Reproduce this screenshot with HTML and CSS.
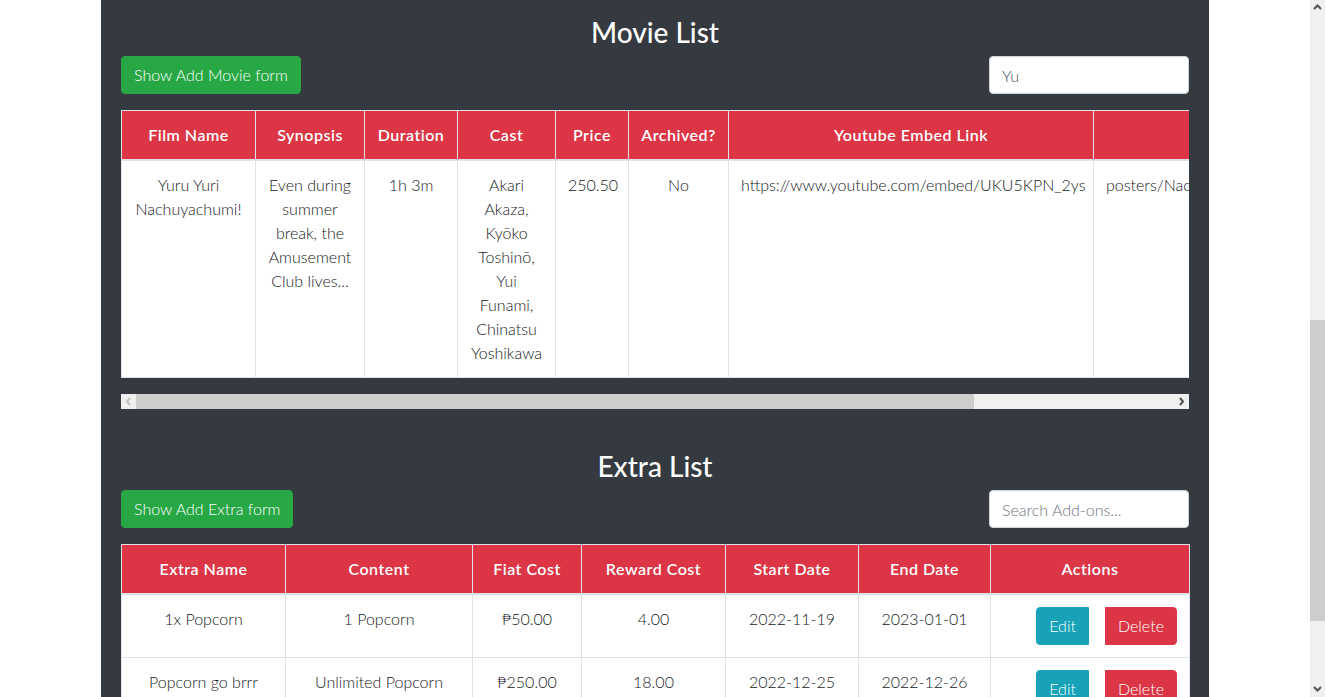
FILE: index.html
```html
<!DOCTYPE html>
<html lang="en">
<head>
<meta charset="utf-8">
<title>Movie List</title>
<link rel="stylesheet" href="styles.css">
</head>
<body>
<div class="viewport">
  <main class="page">
    <div class="panel">
      <section class="list-section">
        <h3 class="list-title">Movie List</h3>
        <div class="toolbar">
          <button class="btn btn-success">Show Add Movie form</button>
          <input class="search" type="text" value="Yu">
        </div>
        <div class="table-clip">
          <table class="data-table movie-table">
            <colgroup>
              <col class="w134"><col class="w109"><col class="w93"><col class="w98"><col class="w73"><col class="w100"><col class="w365"><col class="w350">
            </colgroup>
            <thead>
              <tr>
                <th>Film Name</th><th>Synopsis</th><th>Duration</th><th>Cast</th><th>Price</th><th>Archived?</th><th>Youtube Embed Link</th><th>Poster</th>
              </tr>
            </thead>
            <tbody>
              <tr>
                <td>Yuru Yuri Nachuyachumi!</td>
                <td>Even during summer break, the Amusement Club lives...</td>
                <td>1h 3m</td>
                <td>Akari Akaza, Kyōko Toshinō, Yui Funami, Chinatsu Yoshikawa</td>
                <td>250.50</td>
                <td>No</td>
                <td>https://www.youtube.com/embed/UKU5KPN_2ys</td>
                <td class="left">posters/Nachuyachumi.jpg</td>
              </tr>
            </tbody>
          </table>
        </div>
        <div class="hscroll">
          <div class="sb-btn sb-left"><svg width="15" height="15" viewBox="0 0 15 15"><polyline points="9,4 6,7.5 9,11" fill="none" stroke="#c4c4c4" stroke-width="2"/></svg></div>
          <div class="h-thumb"></div>
          <div class="h-rest"></div>
          <div class="sb-btn sb-right"><svg width="16" height="15" viewBox="0 0 16 15"><polyline points="7,4 10,7.5 7,11" fill="none" stroke="#505050" stroke-width="2"/></svg></div>
        </div>
      </section>

      <section class="list-section extra-section">
        <h3 class="list-title">Extra List</h3>
        <div class="toolbar">
          <button class="btn btn-success">Show Add Extra form</button>
          <input class="search" type="text" placeholder="Search Add-ons...">
        </div>
        <table class="data-table extra-table">
          <colgroup>
            <col class="w164"><col class="w187"><col class="w109"><col class="w144"><col class="w133"><col class="w132"><col class="w199">
          </colgroup>
          <thead>
            <tr>
              <th>Extra Name</th><th>Content</th><th>Fiat Cost</th><th>Reward Cost</th><th>Start Date</th><th>End Date</th><th>Actions</th>
            </tr>
          </thead>
          <tbody>
            <tr>
              <td>1x Popcorn</td><td>1 Popcorn</td><td>₱50.00</td><td>4.00</td><td>2022-11-19</td><td>2023-01-01</td>
              <td class="actions"><button class="btn btn-info">Edit</button><button class="btn btn-danger">Delete</button></td>
            </tr>
            <tr>
              <td>Popcorn go brrr</td><td>Unlimited Popcorn</td><td>₱250.00</td><td>18.00</td><td>2022-12-25</td><td>2022-12-26</td>
              <td class="actions"><button class="btn btn-info">Edit</button><button class="btn btn-danger">Delete</button></td>
            </tr>
          </tbody>
        </table>
      </section>
    </div>
  </main>
  <div class="vscroll">
    <div class="sb-btn v-btn"><svg width="15" height="17" viewBox="0 0 15 17"><polyline points="4,9 7.5,5.5 11,9" fill="none" stroke="#505050" stroke-width="2"/></svg></div>
    <div class="v-before"></div>
    <div class="v-thumb"></div>
    <div class="v-after"></div>
    <div class="sb-btn v-btn"><svg width="15" height="17" viewBox="0 0 15 17"><polyline points="4,7 7.5,10.5 11,7" fill="none" stroke="#505050" stroke-width="2"/></svg></div>
  </div>
</div>
</body>
</html>
```

FILE: styles.css
```css
html, body {
  margin: 0;
  padding: 0;
  height: 697px;
  overflow: hidden;
  background: #fff;
}

body {
  font-family: Lato, "Open Sans", "Liberation Sans", sans-serif;
  font-size: 16px;
  line-height: 24px;
  font-weight: 300;
  color: #16191c;
}

.viewport {
  display: flex;
  height: 697px;
}

.page {
  flex: 1;
  background: #fff;
  overflow: hidden;
}

.panel {
  width: 1108px;
  box-sizing: border-box;
  margin: 0 auto;
  min-height: 697px;
  background: #343a40;
  padding: 15px 20px 0;
}

.list-title {
  margin: 0 0 7px;
  font-size: 28px;
  line-height: 34px;
  font-weight: 500;
  color: #fff;
  text-align: center;
}

.extra-section {
  margin-top: 40px;
}

.toolbar {
  display: flex;
  justify-content: space-between;
  align-items: center;
  margin-bottom: 16px;
}

.btn {
  font-family: inherit;
  font-size: 16px;
  line-height: 24px;
  padding: 6px 12px;
  border: 1px solid transparent;
  border-radius: 4px;
  color: #fff;
  cursor: pointer;
  font-weight: 300;
}

.btn-success {
  background: #28a745;
  border-color: #28a745;
}

.btn-info {
  background: #17a2b8;
  border-color: #17a2b8;
  border-radius: 4px 0 0 4px;
}

.btn-danger {
  background: #dc3545;
  border-color: #dc3545;
  border-radius: 0 4px 4px 0;
  margin-left: 16px;
}

.search {
  width: 200px;
  height: 38px;
  box-sizing: border-box;
  padding: 6px 12px;
  border: 1px solid #ced4da;
  border-radius: 4px;
  background: #fff;
  font-family: inherit;
  font-size: 16px;
  line-height: 24px;
  font-weight: 300;
  color: #495057;
}

.search::placeholder {
  color: #6c757d;
}

.table-clip {
  width: 1068px;
  overflow: hidden;
}

.data-table {
  border-collapse: collapse;
  table-layout: fixed;
  background: #fff;
  margin-bottom: 16px;
}

.movie-table {
  width: 1322px;
}

.extra-table {
  width: 1068px;
}

.data-table th,
.data-table td {
  border: 1px solid #dee2e6;
  padding: 12px;
  vertical-align: top;
  text-align: center;
}

.data-table th {
  background: #dc3545;
  color: #fff;
  font-weight: 600;
  letter-spacing: 0.5px;
  border-bottom: 2px solid #dee2e6;
  white-space: nowrap;
  overflow: hidden;
}

.data-table td.left {
  text-align: left;
  white-space: nowrap;
  overflow: hidden;
}

.data-table td.actions {
  text-align: right;
  white-space: nowrap;
}

.w134 { width: 134px; }
.w109 { width: 109px; }
.w93 { width: 93px; }
.w98 { width: 98px; }
.w73 { width: 73px; }
.w100 { width: 100px; }
.w365 { width: 365px; }
.w350 { width: 350px; }
.w164 { width: 164px; }
.w187 { width: 187px; }
.w144 { width: 144px; }
.w133 { width: 133px; }
.w132 { width: 132px; }
.w199 { width: 199px; }

/* horizontal scrollbar of the movie table */
.hscroll {
  display: flex;
  height: 15px;
  width: 1068px;
  background: #f0f0f0;
}

.sb-btn {
  display: flex;
  align-items: center;
  justify-content: center;
  background: #f0f0f0;
}

.sb-left { width: 15px; }
.sb-right { width: 16px; }

.h-thumb {
  width: 838px;
  background: #cdcdcd;
}

.h-rest {
  flex: 1;
}

.sb-btn svg {
  display: block;
}

/* page scrollbar */
.vscroll {
  width: 15px;
  display: flex;
  flex-direction: column;
  background: #f0f0f0;
}

.v-btn {
  height: 17px;
}

.v-before {
  height: 303px;
}

.v-thumb {
  height: 301px;
  background: #cdcdcd;
}

.v-after {
  flex: 1;
}
```
